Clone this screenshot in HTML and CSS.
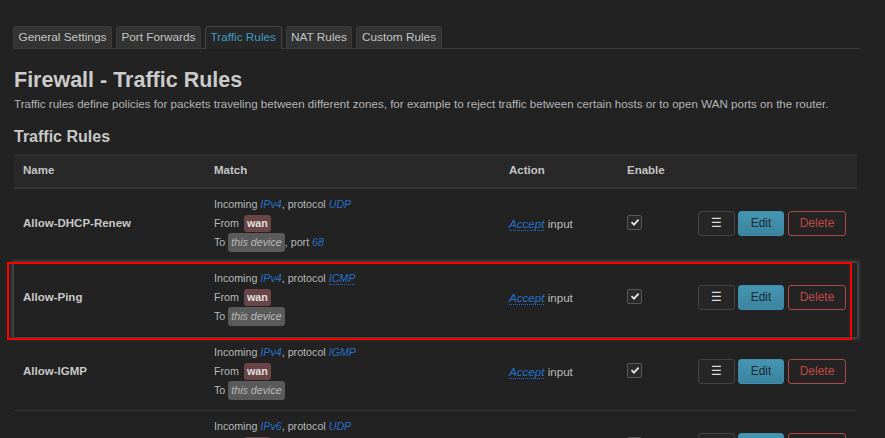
FILE: index.html
```html
<!DOCTYPE html>
<html>
<head>
<meta charset="utf-8">
<link rel="stylesheet" href="styles.css">
</head>
<body>
<div class="page">
  <ul class="tabs">
    <li class="tab">General Settings</li>
    <li class="tab">Port Forwards</li>
    <li class="tab active">Traffic Rules</li>
    <li class="tab">NAT Rules</li>
    <li class="tab">Custom Rules</li>
  </ul>
  <h2 class="title">Firewall - Traffic Rules</h2>
  <p class="desc">Traffic rules define policies for packets traveling between different zones, for example to reject traffic between certain hosts or to open WAN ports on the router.</p>
  <h3 class="subtitle">Traffic Rules</h3>
  <div class="table">
    <div class="row head">
      <div class="cell">Name</div>
      <div class="cell">Match</div>
      <div class="cell">Action</div>
      <div class="cell">Enable</div>
      <div class="cell"></div>
    </div>

    <div class="row">
      <div class="cell name">Allow-DHCP-Renew</div>
      <div class="cell match">
        <div>Incoming <i class="lnk">IPv4</i>, protocol <i class="lnk">UDP</i></div>
        <div>From <span class="zone">wan</span></div>
        <div>To <span class="dev">this device</span>, port <i class="lnk">68</i></div>
      </div>
      <div class="cell act"><i class="lnk abbr">Accept</i> input</div>
      <div class="cell"><span class="chk"><svg viewBox="0 0 14 14" width="14" height="14"><path d="M3.5 7.2 L6 9.6 L10.6 4.6" fill="none" stroke="#e8e8e8" stroke-width="1.8"/></svg></span></div>
      <div class="cell btns"><span class="btn menu">&#9776;</span><span class="btn edit">Edit</span><span class="btn del">Delete</span></div>
    </div>

    <div class="row lifted">
      <div class="cell name">Allow-Ping</div>
      <div class="cell match">
        <div>Incoming <i class="lnk">IPv4</i>, protocol <i class="lnk abbr">ICMP</i></div>
        <div>From <span class="zone">wan</span></div>
        <div>To <span class="dev">this device</span></div>
      </div>
      <div class="cell act"><i class="lnk abbr">Accept</i> input</div>
      <div class="cell"><span class="chk"><svg viewBox="0 0 14 14" width="14" height="14"><path d="M3.5 7.2 L6 9.6 L10.6 4.6" fill="none" stroke="#e8e8e8" stroke-width="1.8"/></svg></span></div>
      <div class="cell btns"><span class="btn menu">&#9776;</span><span class="btn edit">Edit</span><span class="btn del">Delete</span></div>
      <div class="mark"></div>
    </div>

    <div class="row">
      <div class="cell name">Allow-IGMP</div>
      <div class="cell match">
        <div>Incoming <i class="lnk">IPv4</i>, protocol <i class="lnk">IGMP</i></div>
        <div>From <span class="zone">wan</span></div>
        <div>To <span class="dev">this device</span></div>
      </div>
      <div class="cell act"><i class="lnk abbr">Accept</i> input</div>
      <div class="cell"><span class="chk"><svg viewBox="0 0 14 14" width="14" height="14"><path d="M3.5 7.2 L6 9.6 L10.6 4.6" fill="none" stroke="#e8e8e8" stroke-width="1.8"/></svg></span></div>
      <div class="cell btns"><span class="btn menu">&#9776;</span><span class="btn edit">Edit</span><span class="btn del">Delete</span></div>
    </div>

    <div class="row">
      <div class="cell name">Allow-DHCPv6</div>
      <div class="cell match">
        <div>Incoming <i class="lnk">IPv6</i>, protocol <i class="lnk">UDP</i></div>
        <div>From <span class="zone">wan</span></div>
        <div>To <span class="dev">this device</span>, port <i class="lnk">546</i></div>
      </div>
      <div class="cell act"><i class="lnk abbr">Accept</i> input</div>
      <div class="cell"><span class="chk"><svg viewBox="0 0 14 14" width="14" height="14"><path d="M3.5 7.2 L6 9.6 L10.6 4.6" fill="none" stroke="#e8e8e8" stroke-width="1.8"/></svg></span></div>
      <div class="cell btns"><span class="btn menu">&#9776;</span><span class="btn edit">Edit</span><span class="btn del">Delete</span></div>
    </div>
  </div>
</div>
</body>
</html>
```
FILE: styles.css
```css
html, body {
  margin: 0;
  padding: 0;
  background: #222222;
  overflow: hidden;
  height: 438px;
}
body {
  font-family: "Liberation Sans", Arial, sans-serif;
  font-size: 12px;
  color: #bcbcbc;
}
.page {
  padding: 26px 0 0 14px;
  width: 843px;
}
.tabs {
  list-style: none;
  margin: 0 0 0 -1px;
  padding: 0;
  display: flex;
  gap: 4px;
  border-bottom: 1px solid #3c3c3c;
  width: 847px;
}
.tab {
  height: 21px;
  line-height: 21px;
  padding: 0 4.5px;
  background: #333333;
  border: 1px solid #3a3a3a;
  border-bottom: none;
  border-radius: 3px 3px 0 0;
  color: #c4c4c4;
  font-size: 11.8px;
}
.tab.active {
  background: #262626;
  border-color: #444;
  color: #3e9bc4;
  margin-bottom: -1px;
  height: 22px;
}
.title {
  margin: 17px 0 0 0;
  font-size: 21.5px;
  line-height: 28px;
  font-weight: bold;
  color: #cbcbcb;
}
.desc {
  margin: 2px 0 0 0;
  font-size: 11.6px;
  line-height: 16px;
  color: #b4b4b4;
}
.subtitle {
  margin: 15px 0 0 0;
  font-size: 16px;
  line-height: 20px;
  font-weight: bold;
  color: #c8c8c8;
}
.table {
  margin-top: 7px;
  border-top: 2px solid #2f2f2f;
}
.row {
  position: relative;
  display: grid;
  grid-template-columns: 191px 295px 118px 72px 1fr;
  align-items: center;
  padding: 6px 0 10px 0;
  border-bottom: 1px solid #353535;
  line-height: 19px;
}
.row.head {
  background: #282828;
  padding: 5px 0 7px 0;
  height: 19px;
  border-bottom: 2px solid #333;
  font-weight: bold;
  color: #c4c4c4;
}
.row.head .cell {
  font-size: 11.5px;
}
.cell {
  padding-left: 9px;
  font-size: 11px;
}
.name {
  font-weight: bold;
  color: #c8c8c8;
  font-size: 11.5px;
}
.match {
  color: #b8b8b8;
  font-size: 10.7px;
}
.act {
  font-size: 11.6px;
}
.lnk {
  color: #2670cc;
}
.abbr {
  border-bottom: 1px dotted #2670cc;
}
.zone {
  display: inline-block;
  background: #6a4545;
  color: #e0e0e0;
  font-weight: bold;
  padding: 0 3px;
  line-height: 17px;
  border-radius: 3px;
  margin-left: 2px;
}
.dev {
  display: inline-block;
  background: #5a5a5a;
  color: #b8b8b8;
  font-style: italic;
  padding: 0 3px;
  line-height: 19px;
  border-radius: 3px;
}
.chk {
  display: inline-block;
  width: 13px;
  height: 13px;
  border: 1px solid #585858;
  border-radius: 2px;
  background: #2a2a2a;
  vertical-align: middle;
  margin-top: -4px;
}
.chk svg {
  display: block;
  margin: -0.5px 0 0 -0.5px;
}
.btns {
  display: flex;
  gap: 3px;
  padding-left: 8px;
}
.btn {
  box-sizing: border-box;
  height: 25px;
  line-height: 23px;
  border: 1px solid #444;
  border-radius: 3px;
  text-align: center;
  font-size: 12px;
}
.menu {
  width: 37px;
  background: #262626;
  color: #ddd;
  font-size: 12px;
}
.edit {
  width: 46px;
  background: linear-gradient(#4596b3, #3a849f);
  border-color: #3f8cab;
  color: #1f2a30;
}
.del {
  width: 58px;
  margin-left: 1px;
  background: #242424;
  border-color: #b04848;
  color: #c04848;
}
.lifted {
  box-shadow: 0 0 3px 2px #4c4c4c;
  z-index: 1;
  background: #222;
  border-bottom-color: transparent;
}
.mark {
  position: absolute;
  left: -7px;
  top: -1px;
  width: 841px;
  height: 74px;
  border: 2px solid #ff0000;
  pointer-events: none;
}
```
